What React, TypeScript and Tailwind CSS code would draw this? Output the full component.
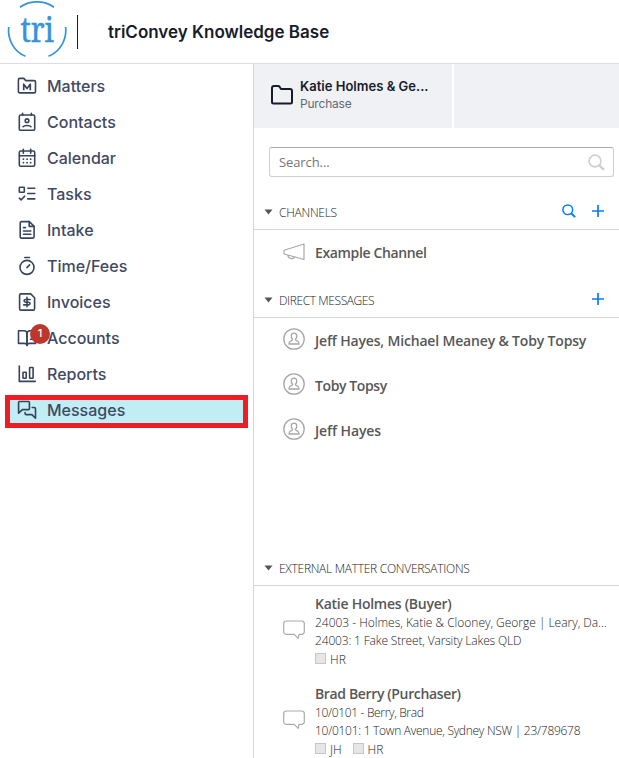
import type { ReactNode } from "react";

type IconName =
  | "matters"
  | "contacts"
  | "calendar"
  | "tasks"
  | "intake"
  | "time"
  | "invoices"
  | "accounts"
  | "reports"
  | "messages";

type NavItem = { icon: IconName; label: string; badge?: number; active?: boolean };

const NAV: NavItem[] = [
  { icon: "matters", label: "Matters" },
  { icon: "contacts", label: "Contacts" },
  { icon: "calendar", label: "Calendar" },
  { icon: "tasks", label: "Tasks" },
  { icon: "intake", label: "Intake" },
  { icon: "time", label: "Time/Fees" },
  { icon: "invoices", label: "Invoices" },
  { icon: "accounts", label: "Accounts", badge: 1 },
  { icon: "reports", label: "Reports" },
  { icon: "messages", label: "Messages", active: true },
];

const DIRECT_MESSAGES = [
  { name: "Jeff Hayes, Michael Meaney & Toby Topsy", tracking: "tracking-[-0.17px]" },
  { name: "Toby Topsy", tracking: "tracking-[-0.4px]" },
  { name: "Jeff Hayes", tracking: "tracking-[-0.1px]" },
];

const CONVERSATIONS = [
  {
    title: "Katie Holmes (Buyer)",
    titleTracking: "tracking-[-0.26px]",
    matter: "24003 - Holmes, Katie & Clooney, George | Leary, Da...",
    matterTracking: "tracking-[-0.02px]",
    address: "24003: 1 Fake Street, Varsity Lakes QLD",
    addressTracking: "tracking-[-0.16px]",
    staff: ["HR"],
  },
  {
    title: "Brad Berry (Purchaser)",
    titleTracking: "tracking-[-0.36px]",
    matter: "10/0101 - Berry, Brad",
    matterTracking: "tracking-[-0.34px]",
    address: "10/0101: 1 Town Avenue, Sydney NSW | 23/789678",
    addressTracking: "tracking-[-0.28px]",
    staff: ["JH", "HR"],
  },
];

export default function App() {
  return (
    <div className="flex h-[758px] w-[619px] flex-col overflow-hidden bg-white font-[Inter,sans-serif]">
      <Header />
      <div className="flex min-h-0 flex-1">
        <Sidebar />
        <main className="flex min-w-0 flex-1 flex-col">
          <MatterTabs />
          <MessagesPanel />
        </main>
      </div>
    </div>
  );
}

function Header() {
  return (
    <header className="flex h-16 shrink-0 items-center border-b border-[#dcdce8]">
      <Logo />
      <div className="ml-[10px] h-[34px] w-px bg-[#1c1c28]" />
      <h1 className="mt-[3px] ml-[30px] text-[17px] font-semibold text-[#171c2b]">triConvey Knowledge Base</h1>
    </header>
  );
}

/** Three open arcs round the word mark. */
function Logo() {
  return (
    <svg className="ml-[6px] h-[63px] w-[61px] shrink-0" viewBox="6 0 61 63" fill="none" stroke="#3593da" strokeWidth="1.7">
      <path d="M20 7.3C30 .2 44 .2 54 7.3" />
      <path d="M8.700 27C7.400 39 13.500 51.500 25.500 56.200" />
      <path d="M65.600 27C67 39 60.500 51.500 48.500 56.200" />
      <text
        x="20.500"
        y="42"
        fill="#3593da"
        strokeWidth="0.5"
        fontSize="34"
        fontFamily="'Noto Serif','DejaVu Serif','Liberation Serif',serif"
        textLength="33.500"
        lengthAdjust="spacingAndGlyphs"
      >
        tri
      </text>
    </svg>
  );
}

function Sidebar() {
  return (
    <nav className="w-[254px] shrink-0 border-r border-[#d5d5da] pt-1">
      {NAV.map((item) => (
        <div key={item.label} className="relative flex h-9 items-center pl-[17px]">
          {item.active && (
            <div className="absolute top-[3px] left-[5px] h-[33px] w-[243px] border-[5px] border-[#ee1c25] bg-[#c1edf4]" />
          )}
          <NavIcon name={item.icon} />
          <span className="relative ml-[10px] text-base font-medium text-[#3f4963]">{item.label}</span>
          {item.badge && (
            <span className="absolute top-[4px] left-[30px] flex size-5 items-center justify-center rounded-full bg-[#be372c] pb-px text-[11px] font-medium text-white">
              {item.badge}
            </span>
          )}
        </div>
      ))}
    </nav>
  );
}

function NavIcon({ name }: { name: IconName }) {
  return (
    <svg
      className="relative size-5 shrink-0"
      viewBox="0 0 20 20"
      fill="none"
      stroke="#39435e"
      strokeWidth="1.6"
      strokeLinejoin="round"
      strokeLinecap="round"
    >
      {NAV_ICONS[name]}
    </svg>
  );
}

const NAV_ICONS: Record<IconName, ReactNode> = {
  matters: (
    <>
      <path d="M1.400 15.500V3.800q0-1.400 1.400-1.400h4l2 2.200h8.300q1.400 0 1.400 1.400v9.500q0 1.400-1.400 1.400H2.800q-1.400 0-1.400-1.400z" />
      <path d="M6.700 14.300V8.200L10 12.600l3.300-4.400v6.100" strokeWidth="1.700" strokeLinecap="butt" />
    </>
  ),
  contacts: (
    <>
      <rect x="2.300" y="3" width="15.400" height="15.300" rx="1.400" />
      <path d="M5.600 1.300v2M14.400 1.300v2M6 14.700c1.500-1.700 6.500-1.700 8 0" />
      <circle cx="10" cy="8.700" r="1.800" />
    </>
  ),
  calendar: (
    <>
      <rect x="2.300" y="3" width="15.400" height="15.200" rx="1.400" />
      <path d="M6.300 1.200v4M13.700 1.200v4M2.300 7.700h15.400" />
      <path d="M6.400 11.200h.1M10 11.200h.1M13.600 11.200h.1M6.400 14.700h.1M10 14.700h.1M13.600 14.700h.1" strokeWidth="1.700" />
    </>
  ),
  tasks: (
    <>
      <rect x="2.300" y="3.300" width="5" height="5" rx=".6" />
      <path d="M10.800 4.300h7M10.800 9.500h7M10.800 14.900h7M2.300 14.200l1.800 1.700 3.500-3.700" />
    </>
  ),
  intake: (
    <>
      <path d="M3.200 16.700V3q0-1.400 1.400-1.400h7.700l4.800 4.700v10.400q0 1.400-1.400 1.400H4.600q-1.400 0-1.400-1.400z" />
      <path d="M12.200 1.800v4.600h4.700M6.500 7.600h2M6.500 11h7.300M6.500 14.300h7.300" />
    </>
  ),
  time: (
    <>
      <circle cx="10" cy="11.400" r="7" />
      <path d="M7.800 1.500h4.600M9.900 11.600l2.700-2.700" />
    </>
  ),
  invoices: (
    <>
      <path d="M2.600 16.700V3.300q0-1.400 1.400-1.400h9.700l3.900 3.800v11q0 1.400-1.400 1.400H4q-1.400 0-1.400-1.400z" />
      <path d="M13.200 7.500H8.700c-2.200 0-2.200 2.700 0 2.700h2.700c2.200 0 2.200 2.700 0 2.700H6.700M10 5.400v9.400" />
    </>
  ),
  accounts: (
    <>
      <path d="M1.500 2.800h5.300Q10 2.800 10 5.500v12q0-2.100-3-2.100H1.500z" />
      <path d="M18.500 2.800h-5.300Q10 2.800 10 5.500v12q0-2.100 3-2.100h5.500z" />
      <path d="M13.500 11.300h2" />
    </>
  ),
  reports: (
    <>
      <path d="M2.300 2v15.400h16" />
      <rect x="6" y="8.300" width="3.200" height="6" rx=".5" />
      <rect x="12.600" y="3.500" width="3.500" height="10.800" rx=".5" />
    </>
  ),
  messages: (
    <>
      <path d="M1.600 13.200V2.300q0-.8.8-.8h9.200q.8 0 .8.800v6.500q0 .8-.8.8H5.400z" />
      <path d="M15.200 7.500h2.100q1.200 0 1.200 1.200v9.500l-3.600-3.600H9.300q-1.200 0-1.200-1.200v-.8" />
    </>
  ),
};

function MatterTabs() {
  return (
    <div className="flex h-16 shrink-0 gap-[2px]">
      <div className="flex w-[198px] items-center bg-[#f0f1f5] pb-[3px] pl-4">
        <svg className="h-6 w-6 shrink-0" viewBox="0 0 24 24" fill="none" stroke="#171c2b" strokeWidth="2" strokeLinejoin="round">
          <path d="M2 19V5q0-2 2-2h4q1 0 1.500.7L11 6h9q2 0 2 2v11q0 1.500-1.500 1.500h-17Q2 20.500 2 19z" />
        </svg>
        <div className="ml-[6px] flex flex-col">
          <span className="text-[13px] leading-[18px] font-semibold tracking-[0.02px] text-[#171c2b]">Katie Holmes &amp; Ge...</span>
          <span className="text-[12px] leading-[17px] tracking-[-0.2px] text-[#656976]">Purchase</span>
        </div>
      </div>
      <div className="flex-1 bg-[#f0f1f5]" />
    </div>
  );
}

function MessagesPanel() {
  return (
    <div className="flex min-h-0 flex-1 flex-col overflow-hidden font-['Open_Sans','Noto_Sans',sans-serif] text-[#575757]">
      <div className="mt-[19px] mr-[5px] ml-[15px] flex h-[30px] shrink-0 items-center justify-between rounded-[3px] border border-[#cfcfcf] border-t-[#adadad] pr-[8px] pl-[9px]">
        <span className="mt-px text-[13px] tracking-[-0.1px] text-[#757575]">Search...</span>
        <SearchIcon className="mt-px size-[17px] text-[#cfcfcf]" />
      </div>

      <SectionHeader title="CHANNELS" className="mt-[17px]" tracking="tracking-[-0.25px]" searchable addable />
      <div className="flex h-[46px] shrink-0 items-center pb-[2px] pl-[29px]">
        <svg className="h-[18px] w-[22px] shrink-0" viewBox="0 0 22 18" fill="none" stroke="#a9a9a9" strokeWidth="1.2" strokeLinejoin="round">
          <path d="M1 7.200L21 1v15.500L1 11zM5 12.200c-.3 3.800 5.800 4.600 6.300 1.700" />
        </svg>
        <span className="mt-px ml-[10px] text-[14px] font-semibold tracking-[-0.36px]">Example Channel</span>
      </div>

      <SectionHeader title="DIRECT MESSAGES" className="mt-[6px]" tracking="tracking-[-0.4px]" addable />
      <div className="h-[232px] shrink-0">
        {DIRECT_MESSAGES.map((dm) => (
          <div key={dm.name} className="flex h-[45px] items-center pb-[3px] pl-[29px]">
            <PersonIcon />
            <span className={`mt-[3px] ml-[10px] text-[14px] font-semibold ${dm.tracking}`}>{dm.name}</span>
          </div>
        ))}
      </div>

      <SectionHeader title="EXTERNAL MATTER CONVERSATIONS" className="" tracking="tracking-[-0.28px]" />
      <div className="shrink-0 pt-[9px]">
        {CONVERSATIONS.map((c) => (
          <div key={c.title} className="flex h-[90px] pl-[29px]">
            <svg className="mt-[25px] h-[21px] w-[22px] shrink-0" viewBox="0 0 22 21" fill="none" stroke="#aaa" strokeWidth="1.2" strokeLinejoin="round">
              <path d="M3.500 1h15Q21.300 1 21.300 3.500v8.300q0 2.500-2.800 2.500h-2.400l-.9 4-4-4H3.500Q.7 14.300.7 11.800V3.500Q.7 1 3.500 1z" />
            </svg>
            <div className="ml-[10px] min-w-0 text-[12px] leading-[18px] font-light whitespace-nowrap text-[#222]">
              <div className={`mb-px text-[14px] font-semibold text-[#575757] ${c.titleTracking}`}>{c.title}</div>
              <div className={c.matterTracking}>{c.matter}</div>
              <div className={c.addressTracking}>{c.address}</div>
              <div className="flex gap-[11px]">
                {c.staff.map((s) => (
                  <span key={s} className="flex items-center gap-[4px]">
                    <span className="mb-[2px] size-[11px] border border-[#c6c6c6] bg-[#e6e6e6]" />
                    <span className="mt-px">{s}</span>
                  </span>
                ))}
              </div>
            </div>
          </div>
        ))}
      </div>
    </div>
  );
}

function SectionHeader({
  title,
  className,
  tracking,
  searchable,
  addable,
}: {
  title: string;
  className: string;
  tracking: string;
  searchable?: boolean;
  addable?: boolean;
}) {
  return (
    <div className={`flex h-9 shrink-0 items-center border-b border-[#d6d6d6] pr-[15px] pl-[10px] ${className}`}>
      <svg className="h-[6px] w-[9px]" viewBox="0 0 9 6" fill="#555">
        <path d="M.5.500h8L4.500 5.500z" />
      </svg>
      <span className={`mt-[2px] ml-[6px] text-[12px] font-light text-[#222] ${tracking}`}>{title}</span>
      <div className="mb-px ml-auto flex items-center gap-[16px] text-[#087bfa]">
        {searchable && <SearchIcon className="size-[14px]" bold />}
        {addable && (
          <svg className="size-[12px]" viewBox="0 0 12 12" stroke="currentColor" strokeWidth="1.7">
            <path d="M6 0v12M0 6h12" />
          </svg>
        )}
      </div>
    </div>
  );
}

function SearchIcon({ className, bold }: { className: string; bold?: boolean }) {
  return (
    <svg className={className} viewBox="0 0 17 17" fill="none" stroke="currentColor" strokeWidth={bold ? 1.8 : 1.6}>
      <circle cx="7" cy="7" r="5.900" />
      <path d="M11.200 11.200l4.700 4.700" strokeWidth="2.400" />
    </svg>
  );
}

function PersonIcon() {
  return (
    <svg className="size-[22px] shrink-0" viewBox="0 0 22 22" fill="none" stroke="#a6a6a6" strokeWidth="1.3" strokeLinejoin="round">
      <circle cx="11" cy="11" r="10.200" />
      <path d="M9.600 11.300C7.300 9.200 7.900 5.200 11 5.200s3.700 4 1.400 6.100q.1 1.200 2 1.700 1.600.5 1.600 3H6q0-2.500 1.600-3 1.900-.5 2-1.700z" />
    </svg>
  );
}
